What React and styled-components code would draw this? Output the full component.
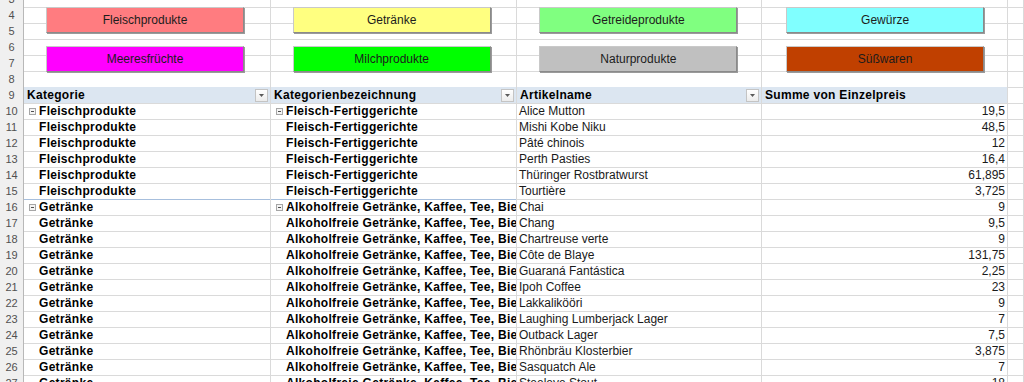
import styled, { createGlobalStyle } from "styled-components"

const GRID = "#dadada"
const COLS = "24px 247px 246px 245px 246px 1fr"

const GlobalStyle = createGlobalStyle`
    html, body {
        margin: 0;
        height: 382px;
        overflow: hidden;
        background: #fff;
        font-family: "Liberation Sans", Arial, sans-serif;
    }
`

const buttons = [
    { label: "Fleischprodukte", color: "#ff7c80" },
    { label: "Getränke", color: "#ffff80" },
    { label: "Getreideprodukte", color: "#80ff80" },
    { label: "Gewürze", color: "#80ffff" },
    { label: "Meeresfrüchte", color: "#ff00ff" },
    { label: "Milchprodukte", color: "#00ff00" },
    { label: "Naturprodukte", color: "#c0c0c0" },
    { label: "Süßwaren", color: "#c04000" },
]

const GET = "Alkoholfreie Getränke, Kaffee, Tee, Bier"

const rows = [
    ["Fleischprodukte", "Fleisch-Fertiggerichte", "Alice Mutton", "19,5", true],
    ["Fleischprodukte", "Fleisch-Fertiggerichte", "Mishi Kobe Niku", "48,5"],
    ["Fleischprodukte", "Fleisch-Fertiggerichte", "Pâté chinois", "12"],
    ["Fleischprodukte", "Fleisch-Fertiggerichte", "Perth Pasties", "16,4"],
    ["Fleischprodukte", "Fleisch-Fertiggerichte", "Thüringer Rostbratwurst", "61,895"],
    ["Fleischprodukte", "Fleisch-Fertiggerichte", "Tourtière", "3,725"],
    ["Getränke", GET, "Chai", "9", true],
    ["Getränke", GET, "Chang", "9,5"],
    ["Getränke", GET, "Chartreuse verte", "9"],
    ["Getränke", GET, "Côte de Blaye", "131,75"],
    ["Getränke", GET, "Guaraná Fantástica", "2,25"],
    ["Getränke", GET, "Ipoh Coffee", "23"],
    ["Getränke", GET, "Lakkalikööri", "9"],
    ["Getränke", GET, "Laughing Lumberjack Lager", "7"],
    ["Getränke", GET, "Outback Lager", "7,5"],
    ["Getränke", GET, "Rhönbräu Klosterbier", "3,875"],
    ["Getränke", GET, "Sasquatch Ale", "7"],
    ["Getränke", GET, "Steeleye Stout", "18"],
]

const DropArrow = () => (
    <svg width="5" height="3" viewBox="0 0 5 3">
        <path d="M0 0h5L2.5 3z" fill="#5a5a5a" />
    </svg>
)

const App = () => {
    return (
        <>
            <GlobalStyle />
            <Sheet>
                {[3, 4, 5, 6, 7, 8].map((n) => (
                    <Row key={n}>
                        <RowNum>{n}</RowNum>
                        <Cell />
                        <Cell />
                        <Cell />
                        <Cell />
                        <Cell />
                    </Row>
                ))}
                <Row>
                    <RowNum>9</RowNum>
                    <HeadCell>
                        Kategorie
                        <FilterBtn><DropArrow /></FilterBtn>
                    </HeadCell>
                    <HeadCell>
                        Kategorienbezeichnung
                        <FilterBtn><DropArrow /></FilterBtn>
                    </HeadCell>
                    <HeadCell>
                        Artikelname
                        <FilterBtn><DropArrow /></FilterBtn>
                    </HeadCell>
                    <HeadCell>Summe von Einzelpreis</HeadCell>
                    <Cell />
                </Row>
                {rows.map(([kat, bez, name, price, first], i) => {
                    const line = i === 5 ? "#a7bfdd" : undefined
                    return (
                        <Row key={i}>
                            <RowNum>{10 + i}</RowNum>
                            <Cell $bold $indent={!first} $line={line}>
                                {first && <Collapse />}
                                {kat}
                            </Cell>
                            <Cell $bold $indent={!first} $line={line}>
                                {first && <Collapse />}
                                {bez}
                            </Cell>
                            <Cell>{name}</Cell>
                            <Cell $right>{price}</Cell>
                            <Cell />
                        </Row>
                    )
                })}
                <ButtonLayer>
                    {buttons.map((b) => (
                        <ShapeButton key={b.label} $color={b.color}>{b.label}</ShapeButton>
                    ))}
                </ButtonLayer>
            </Sheet>
        </>
    )
}

export default App

const Sheet = styled.div`
    position: relative;
    width: 1024px;
    margin-top: -9px;
`

const Row = styled.div`
    display: grid;
    grid-template-columns: ${COLS};
    height: 16px;
`

const RowNum = styled.div`
    box-sizing: border-box;
    background: #f0f0f0;
    border-right: 1px solid #b8b8b8;
    border-bottom: 1px solid #d4d4d4;
    color: #505050;
    font-size: 11px;
    line-height: 16px;
    text-align: center;
`

const Cell = styled.div`
    box-sizing: border-box;
    border-right: 1px solid ${GRID};
    border-bottom: 1px solid ${(p) => p.$line || GRID};
    padding: 0 2px;
    padding-left: ${(p) => (p.$indent ? "15px" : "2px")};
    font-size: 12px;
    line-height: 16px;
    font-weight: ${(p) => (p.$bold ? 700 : 400)};
    letter-spacing: ${(p) => (p.$bold ? "0.3px" : "0")};
    color: ${(p) => (p.$bold ? "#000" : "#1a1a1a")};
    text-align: ${(p) => (p.$right ? "right" : "left")};
    white-space: nowrap;
    overflow: hidden;
`

const HeadCell = styled.div`
    box-sizing: border-box;
    display: flex;
    align-items: center;
    justify-content: space-between;
    padding: 0 2px 0 3px;
    background: #dce6f1;
    border-right: 1px solid ${GRID};
    border-bottom: 1px solid ${GRID};
    font-size: 12px;
    font-weight: 700;
    letter-spacing: 0.3px;
    color: #000;
    white-space: nowrap;
    overflow: hidden;
`

const FilterBtn = styled.span`
    box-sizing: border-box;
    width: 13px;
    height: 13px;
    display: flex;
    align-items: center;
    justify-content: center;
    background: linear-gradient(#ffffff, #ececec);
    border: 1px solid #c4c4c4;
`

const Collapse = styled.span`
    position: relative;
    display: inline-block;
    box-sizing: border-box;
    width: 7px;
    height: 7px;
    margin: 0 3px 0 3px;
    border: 1px solid #a6a6a6;
    background: #f4f4f4;
    vertical-align: 0px;

    &::after {
        content: "";
        position: absolute;
        left: 1px;
        top: 2px;
        width: 3px;
        height: 1px;
        background: #505050;
    }
`

const ButtonLayer = styled.div`
    position: absolute;
    top: 16px;
    left: 46px;
    display: grid;
    grid-template-columns: repeat(4, 198px);
    grid-auto-rows: 26px;
    column-gap: 48.7px;
    row-gap: 13px;
`

const ShapeButton = styled.div`
    box-sizing: border-box;
    display: flex;
    align-items: center;
    justify-content: center;
    background: ${(p) => p.$color};
    border: 1px solid #c9c9c9;
    border-right-color: #8a8a8a;
    border-bottom-color: #8a8a8a;
    box-shadow: 1px 1px 0 #9a9a9a;
    font-size: 12px;
    color: #1c1c1c;
`
